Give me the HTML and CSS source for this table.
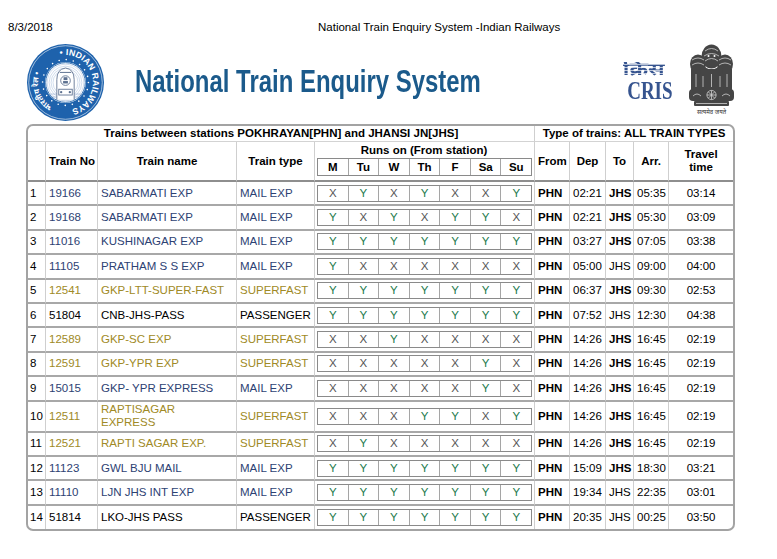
FILE: index.html
```html
<!DOCTYPE html>
<html lang="en">
<head>
<meta charset="utf-8">
<title>National Train Enquiry System -Indian Railways</title>
<link rel="stylesheet" href="styles.css">
</head>
<body>
<div class="printhead"><span>8/3/2018</span><span>National Train Enquiry System -Indian Railways</span></div>

<div class="banner">
  <svg class="irlogo" width="77" height="77" viewBox="0 0 80 80">
    <defs>
      <path id="irTop" d="M11.5 40 A28.5 28.5 0 0 1 68.5 40 A28.5 28.5 0 0 1 40 68.5"/>
      <path id="irLeft" d="M40 68.5 A28.5 28.5 0 0 1 11.5 40 A28.5 28.5 0 0 1 40 11.5"/>
      <clipPath id="irIn"><circle cx="40" cy="40" r="20"/></clipPath>
    </defs>
    <circle cx="40" cy="40" r="40" fill="#1e62ac"/>
    <circle cx="40" cy="40" r="38.2" fill="none" stroke="#ffffff" stroke-width="0.6"/>
    <text class="ir-en"><textPath href="#irTop" startOffset="39">• INDIAN RAILWAYS</textPath></text>
    <text class="ir-hi"><textPath href="#irLeft" startOffset="14">भारतीय रेल •</textPath></text>
    <circle cx="40" cy="40" r="23.8" fill="none" stroke="#ffffff" stroke-width="1.7" stroke-linecap="round" stroke-dasharray="0 7.48"/>
    <circle cx="40" cy="40" r="21.3" fill="#ffffff"/>
    <g clip-path="url(#irIn)" fill="none" stroke="#a9c1de" stroke-width="0.55">
      <circle cx="40" cy="40" r="19"/>
      <circle cx="40" cy="40" r="17"/>
      <circle cx="40" cy="40" r="15"/>
      <circle cx="40" cy="40" r="13"/>
      <path d="M20 52 H60 M20 55 H60 M20 58 H60" stroke="#8aa6cc"/>
    </g>
    <circle cx="40" cy="40" r="20.6" fill="none" stroke="#1e62ac" stroke-width="0.9"/>
    <g fill="#ffffff" stroke="#5b6f8f" stroke-width="0.9">
      <path d="M31 58 L31 37 Q31 26 40 25 Q49 26 49 37 L49 58"/>
      <circle cx="40" cy="38" r="5"/>
      <rect x="33" y="47" width="14" height="6"/>
    </g>
    <g fill="#5b6f8f">
      <path d="M38 34.5 h4 v3 h-4 z"/>
      <path d="M37.5 38.5 h5 v2.5 h-5 z"/>
      <circle cx="35.5" cy="50" r="1.2"/>
      <circle cx="44.5" cy="50" r="1.2"/>
      <rect x="34" y="29" width="12" height="1"/>
    </g>
  </svg>

  <h1 class="title"><span>National Train Enquiry System</span></h1>

  <div class="cris">
    <div class="cris-hi"><span>क्रिस</span></div>
    <div class="cris-en"><span>CRIS</span></div>
  </div>

  <div class="emblem">
    <svg width="47" height="64" viewBox="0 0 47 64">
      <g fill="#454545">
        <ellipse cx="10" cy="20" rx="8" ry="9.5"/>
        <ellipse cx="37" cy="20" rx="8" ry="9.5"/>
        <path d="M3 25 L3 46 L44 46 L44 25 Z"/>
        <ellipse cx="23.5" cy="12.5" rx="10" ry="12"/>
        <path d="M13 19 Q23.5 32 34 19 L36 46 L11 46 Z"/>
        <rect x="1" y="45" width="45" height="12" rx="4"/>
        <rect x="6" y="57" width="35" height="5" rx="1"/>
      </g>
      <g fill="none" stroke="#cfcfcf" stroke-width="0.8">
        <circle cx="23.5" cy="51" r="4.6"/>
        <path d="M23.5 46.4 V55.6 M18.9 51 H28.1 M20.3 47.8 L26.7 54.2 M26.7 47.8 L20.3 54.2"/>
        <path d="M17 7 Q23.5 2 30 7 M16 12 Q23.5 7 31 12 M17 17 Q23.5 12 30 17"/>
        <path d="M4 16 Q10 12 16 16 M4 21 Q10 17 16 21 M31 16 Q37 12 43 16 M31 21 Q37 17 43 21"/>
        <path d="M8 30 V43 M15 32 V43 M23.5 30 V43 M32 32 V43 M39 30 V43"/>
        <path d="M5 52 q4 -4 8 0 M34 52 q4 -4 8 0"/>
        <path d="M8 59.5 H39"/>
      </g>
      <g fill="#ffffff"><circle cx="20.5" cy="12" r="1"/><circle cx="26.5" cy="12" r="1"/></g>
    </svg>
    <div class="motto">सत्यमेव जयते</div>
  </div>
</div>

<div class="tablebox">
<table class="trains">
  <colgroup>
    <col style="width:18px"><col style="width:52px"><col style="width:139px"><col style="width:78px"><col style="width:220px">
    <col style="width:35px"><col style="width:36px"><col style="width:28px"><col style="width:35px"><col style="width:64px">
  </colgroup>
  <thead>
    <tr class="hr1">
      <th colspan="5">Trains between stations POKHRAYAN[PHN] and JHANSI JN[JHS]</th>
      <th colspan="5">Type of trains: ALL TRAIN TYPES</th>
    </tr>
    <tr class="hr2">
      <th></th><th>Train No</th><th>Train name</th><th>Train type</th>
      <th class="runs"><div class="runs-label">Runs on (From station)</div>
        <div class="days dh"><span>M</span><span>Tu</span><span>W</span><span>Th</span><span>F</span><span>Sa</span><span>Su</span></div></th>
      <th>From</th><th>Dep</th><th>To</th><th>Arr.</th><th>Travel<br>time</th>
    </tr>
  </thead>
  <tbody>
    <tr class="mail"><td>1</td><td class="k">19166</td><td class="k">SABARMATI EXP</td><td class="k">MAIL EXP</td>
      <td class="dc"><div class="days"><span class="x">X</span><span class="y">Y</span><span class="x">X</span><span class="y">Y</span><span class="x">X</span><span class="x">X</span><span class="y">Y</span></div></td>
      <td class="b">PHN</td><td>02:21</td><td class="b">JHS</td><td>05:35</td><td class="c">03:14</td></tr>
    <tr class="mail"><td>2</td><td class="k">19168</td><td class="k">SABARMATI EXP</td><td class="k">MAIL EXP</td>
      <td class="dc"><div class="days"><span class="y">Y</span><span class="x">X</span><span class="y">Y</span><span class="x">X</span><span class="y">Y</span><span class="y">Y</span><span class="x">X</span></div></td>
      <td class="b">PHN</td><td>02:21</td><td class="b">JHS</td><td>05:30</td><td class="c">03:09</td></tr>
    <tr class="mail"><td>3</td><td class="k">11016</td><td class="k">KUSHINAGAR EXP</td><td class="k">MAIL EXP</td>
      <td class="dc"><div class="days"><span class="y">Y</span><span class="y">Y</span><span class="y">Y</span><span class="y">Y</span><span class="y">Y</span><span class="y">Y</span><span class="y">Y</span></div></td>
      <td class="b">PHN</td><td>03:27</td><td class="b">JHS</td><td>07:05</td><td class="c">03:38</td></tr>
    <tr class="mail"><td>4</td><td class="k">11105</td><td class="k">PRATHAM S S EXP</td><td class="k">MAIL EXP</td>
      <td class="dc"><div class="days"><span class="y">Y</span><span class="x">X</span><span class="x">X</span><span class="x">X</span><span class="x">X</span><span class="x">X</span><span class="x">X</span></div></td>
      <td class="b">PHN</td><td>05:00</td><td>JHS</td><td>09:00</td><td class="c">04:00</td></tr>
    <tr class="sf"><td>5</td><td class="k">12541</td><td class="k">GKP-LTT-SUPER-FAST</td><td class="k">SUPERFAST</td>
      <td class="dc"><div class="days"><span class="y">Y</span><span class="y">Y</span><span class="y">Y</span><span class="y">Y</span><span class="y">Y</span><span class="y">Y</span><span class="y">Y</span></div></td>
      <td class="b">PHN</td><td>06:37</td><td class="b">JHS</td><td>09:30</td><td class="c">02:53</td></tr>
    <tr class="pass"><td>6</td><td class="k">51804</td><td class="k">CNB-JHS-PASS</td><td class="k">PASSENGER</td>
      <td class="dc"><div class="days"><span class="y">Y</span><span class="y">Y</span><span class="y">Y</span><span class="y">Y</span><span class="y">Y</span><span class="y">Y</span><span class="y">Y</span></div></td>
      <td class="b">PHN</td><td>07:52</td><td>JHS</td><td>12:30</td><td class="c">04:38</td></tr>
    <tr class="sf"><td>7</td><td class="k">12589</td><td class="k">GKP-SC EXP</td><td class="k">SUPERFAST</td>
      <td class="dc"><div class="days"><span class="x">X</span><span class="x">X</span><span class="y">Y</span><span class="x">X</span><span class="x">X</span><span class="x">X</span><span class="x">X</span></div></td>
      <td class="b">PHN</td><td>14:26</td><td class="b">JHS</td><td>16:45</td><td class="c">02:19</td></tr>
    <tr class="sf"><td>8</td><td class="k">12591</td><td class="k">GKP-YPR EXP</td><td class="k">SUPERFAST</td>
      <td class="dc"><div class="days"><span class="x">X</span><span class="x">X</span><span class="x">X</span><span class="x">X</span><span class="x">X</span><span class="y">Y</span><span class="x">X</span></div></td>
      <td class="b">PHN</td><td>14:26</td><td class="b">JHS</td><td>16:45</td><td class="c">02:19</td></tr>
    <tr class="mail"><td>9</td><td class="k">15015</td><td class="k">GKP- YPR EXPRESS</td><td class="k">MAIL EXP</td>
      <td class="dc"><div class="days"><span class="x">X</span><span class="x">X</span><span class="x">X</span><span class="x">X</span><span class="x">X</span><span class="y">Y</span><span class="x">X</span></div></td>
      <td class="b">PHN</td><td>14:26</td><td class="b">JHS</td><td>16:45</td><td class="c">02:19</td></tr>
    <tr class="sf tall"><td>10</td><td class="k">12511</td><td class="k">RAPTISAGAR<br>EXPRESS</td><td class="k">SUPERFAST</td>
      <td class="dc"><div class="days"><span class="x">X</span><span class="x">X</span><span class="x">X</span><span class="y">Y</span><span class="y">Y</span><span class="x">X</span><span class="y">Y</span></div></td>
      <td class="b">PHN</td><td>14:26</td><td class="b">JHS</td><td>16:45</td><td class="c">02:19</td></tr>
    <tr class="sf"><td>11</td><td class="k">12521</td><td class="k">RAPTI SAGAR EXP.</td><td class="k">SUPERFAST</td>
      <td class="dc"><div class="days"><span class="x">X</span><span class="y">Y</span><span class="x">X</span><span class="x">X</span><span class="x">X</span><span class="x">X</span><span class="x">X</span></div></td>
      <td class="b">PHN</td><td>14:26</td><td class="b">JHS</td><td>16:45</td><td class="c">02:19</td></tr>
    <tr class="mail"><td>12</td><td class="k">11123</td><td class="k">GWL BJU MAIL</td><td class="k">MAIL EXP</td>
      <td class="dc"><div class="days"><span class="y">Y</span><span class="y">Y</span><span class="y">Y</span><span class="y">Y</span><span class="y">Y</span><span class="y">Y</span><span class="y">Y</span></div></td>
      <td class="b">PHN</td><td>15:09</td><td class="b">JHS</td><td>18:30</td><td class="c">03:21</td></tr>
    <tr class="mail"><td>13</td><td class="k">11110</td><td class="k">LJN JHS INT EXP</td><td class="k">MAIL EXP</td>
      <td class="dc"><div class="days"><span class="y">Y</span><span class="y">Y</span><span class="y">Y</span><span class="y">Y</span><span class="y">Y</span><span class="y">Y</span><span class="y">Y</span></div></td>
      <td class="b">PHN</td><td>19:34</td><td>JHS</td><td>22:35</td><td class="c">03:01</td></tr>
    <tr class="pass"><td>14</td><td class="k">51814</td><td class="k">LKO-JHS PASS</td><td class="k">PASSENGER</td>
      <td class="dc"><div class="days"><span class="y">Y</span><span class="y">Y</span><span class="y">Y</span><span class="y">Y</span><span class="y">Y</span><span class="y">Y</span><span class="y">Y</span></div></td>
      <td class="b">PHN</td><td>20:35</td><td>JHS</td><td>00:25</td><td class="c">03:50</td></tr>
  </tbody>
</table>
</div>
</body>
</html>
```

FILE: styles.css
```css
* { box-sizing: border-box; }
html, body { background: #ffffff; }
body {
  margin: 0;
  width: 777px;
  font-family: "Liberation Sans", Arial, sans-serif;
  color: #000;
}

.printhead {
  display: grid;
  grid-template-columns: 310px auto;
  padding: 20px 8px 0;
  font-size: 11.5px;
  line-height: 14px;
}

.banner {
  display: flex;
  align-items: flex-start;
  width: 735px;
  height: 80px;
  margin-top: 10px;
  padding-left: 27px;
}
.irlogo { display: block; flex: none; }
.ir-en { font-family: "Liberation Sans", Arial, sans-serif; font-weight: 700; font-size: 9px; fill: #fff; letter-spacing: 0.2px; }
.ir-hi { font-family: "Noto Sans Devanagari", "Lohit Devanagari", "FreeSans", sans-serif; font-weight: 700; font-size: 8px; fill: #fff; }

.title {
  margin: 21px 0 0 31px;
  width: 350px;
  flex: none;
  font-size: 31.5px;
  line-height: 32px;
  font-weight: 700;
  color: #1b5a8b;
  white-space: nowrap;
}
.title span { display: inline-block; transform: scaleX(0.76); transform-origin: 0 50%; }

.cris {
  margin: 18px 0 0 auto;
  width: 48px;
  flex: none;
  color: #36548f;
  text-align: center;
}
.cris-hi {
  height: 18px;
  font-family: "Noto Sans Devanagari", "Lohit Devanagari", "FreeSans", sans-serif;
  font-weight: 700;
  font-size: 18px;
  line-height: 18px;
  overflow: visible;
}
.cris-hi span {
  display: inline-block;
  transform: scaleX(1.25);
  background: repeating-linear-gradient(to bottom, #36548f 0, #36548f 2px, rgba(54, 84, 143, 0.35) 2px, rgba(54, 84, 143, 0.35) 3px);
  -webkit-background-clip: text;
  background-clip: text;
  color: transparent;
}
.cris-en {
  height: 20px;
  margin-top: 1px;
  font-family: "Liberation Serif", "Times New Roman", serif;
  font-weight: 700;
  font-size: 25px;
  line-height: 20px;
}
.cris-en span { display: inline-block; transform: scaleX(0.76); }

.emblem {
  margin-left: 20px;
  width: 47px;
  flex: none;
  text-align: center;
}
.emblem svg { display: block; }
.motto {
  font-family: "Noto Sans Devanagari", "Lohit Devanagari", "FreeSans", sans-serif;
  font-size: 6px;
  line-height: 10px;
  color: #333;
  white-space: nowrap;
}

.tablebox {
  margin-left: 26px;
  width: 709px;
  border: 2px solid #a3a3a3;
  border-radius: 7px;
  overflow: hidden;
}
.trains {
  width: 705px;
  table-layout: fixed;
  border-collapse: separate;
  border-spacing: 0;
  font-size: 11.5px;
}
.trains th, .trains td {
  padding: 0 3px;
  border-right: 1px solid #cfcfcf;
  white-space: nowrap;
  vertical-align: middle;
}
.trains th:last-child, .trains td:last-child { border-right: none; }
.trains th { font-weight: 700; text-align: center; line-height: 13px; }

.hr1 th { height: 16px; border-bottom: 1px solid #d3d3d3; }
.hr2 th { height: 40px; border-bottom: 2px solid #8e8e8e; }
.hr2 th.runs { vertical-align: top; padding: 1px 3px 0 2px; }
.runs-label { line-height: 14px; }

.trains td {
  height: 24.4px;
  border-bottom: 2px solid #a8a8a8;
  text-align: left;
  line-height: 13px;
}
.trains tbody tr:last-child td { border-bottom: none; height: 23px; }
.trains tr.tall td { height: 31px; }
.trains td:first-child { padding: 0 0 0 2px; }
.trains td.b { font-weight: 700; }
.trains td.c { text-align: center; }
.trains td.dc { padding: 0 3px 0 2px; }

.mail .k { color: #2d4273; }
.sf .k { color: #a08a26; }
.pass .k { color: #000; }

.days {
  display: flex;
  width: 215px;
  height: 17px;
  border: 1px solid #8a8a8a;
  margin-top: 1px;
}
.dc .days { margin-top: 0; }
.days span {
  flex: 1;
  text-align: center;
  line-height: 15px;
  border-right: 1px solid #a5a5a5;
}
.days span:last-child { border-right: none; }
.days.dh { height: 18px; }
.days.dh span { line-height: 16px; }
.days .y { color: #227a4c; }
.days .x { color: #555; }
```
